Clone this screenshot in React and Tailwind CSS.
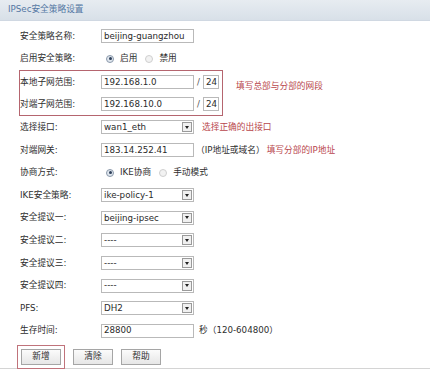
const FONT = "font-['DejaVu_Sans','Noto_Sans_CJK_SC',sans-serif]";

function TextBox({ value, className = 'w-[93px]' }) {
  return (
    <div className={`${className} h-[14px] border border-[#b9b9b9] bg-white flex items-center px-[2px] text-[#2a2a2a] leading-none`}>
      {value}
    </div>
  );
}

function SelectBox({ value }) {
  return (
    <div className="w-[93px] h-[14px] border border-[#b9b9b9] bg-white flex items-center justify-between pl-[2px] pr-[1px] text-[#2a2a2a] leading-none">
      <span>{value}</span>
      <span className="w-[10px] h-[10px] border border-[#9a9a9a] bg-[#f0f0f0] flex items-center justify-center">
        <span className="w-0 h-0 border-l-[2.5px] border-r-[2.5px] border-t-[3px] border-l-transparent border-r-transparent border-t-[#222]" />
      </span>
    </div>
  );
}

function Radio({ checked }) {
  return (
    <span
      className={`w-[8px] h-[8px] rounded-full border flex items-center justify-center ${
        checked ? 'border-[#8c9aab] bg-[#dfe6ee]' : 'border-[#cfcfcf] bg-[#f2f2f2]'
      }`}
    >
      {checked && <span className="w-[3px] h-[3px] rounded-full bg-[#2c3e58]" />}
    </span>
  );
}

function Row({ label, children }) {
  return (
    <div className="flex items-center h-[22.6px]">
      <div className="w-[101px] pl-[20px] text-[#2e2e2e]">{label}</div>
      {children}
    </div>
  );
}

function Note({ children, className = '' }) {
  return <span className={`text-[#b8464c] ${className}`}>{children}</span>;
}

function Button({ children }) {
  return (
    <button
      type="button"
      className="w-[40px] h-[16px] border border-[#a5a5a5] bg-gradient-to-b from-[#fbfbfb] to-[#e6e6e6] text-[#2e2e2e] leading-none"
    >
      {children}
    </button>
  );
}

export default function App() {
  return (
    <div className={`w-[430px] h-[371px] bg-white overflow-hidden text-[8.7px] ${FONT}`}>
      <div className="h-[21px] bg-gradient-to-b from-[#e7ecf1] to-[#d8e0e8] border-b border-[#d0d8e2] flex items-center px-[8px] text-[#5477a3]">
        IPSec安全策略设置
      </div>

      <div className="pt-[4px]">
        <Row label="安全策略名称:">
          <TextBox value="beijing-guangzhou" />
        </Row>
        <Row label="启用安全策略:">
          <div className="flex items-center ml-[5px] text-[#2e2e2e]">
            <Radio checked />
            <span className="ml-[6px]">启用</span>
            <span className="ml-[8px]">
              <Radio />
            </span>
            <span className="ml-[6px]">禁用</span>
          </div>
        </Row>

        <div className="flex items-start">
          <div className="ml-[19px] w-[204px] border border-[#b5656f]">
            <div className="flex items-center h-[22px]">
              <div className="w-[81px] text-[#2e2e2e]">本地子网范围:</div>
              <TextBox value="192.168.1.0" />
              <span className="ml-[3px] text-[#555]">/</span>
              <TextBox value="24" className="w-[16px] ml-[3px]" />
            </div>
            <div className="flex items-center h-[22px]">
              <div className="w-[81px] text-[#2e2e2e]">对端子网范围:</div>
              <TextBox value="192.168.10.0" />
              <span className="ml-[3px] text-[#555]">/</span>
              <TextBox value="24" className="w-[16px] ml-[3px]" />
            </div>
          </div>
          <Note className="ml-[13px] mt-[10px]">填写总部与分部的网段</Note>
        </div>

        <Row label="选择接口:">
          <SelectBox value="wan1_eth" />
          <Note className="ml-[8px]">选择正确的出接口</Note>
        </Row>
        <Row label="对端网关:">
          <TextBox value="183.14.252.41" />
          <span className="ml-[2px] text-[#2e2e2e]">（IP地址或域名）</span>
          <Note className="ml-[2px]">填写分部的IP地址</Note>
        </Row>
        <Row label="协商方式:">
          <div className="flex items-center ml-[5px] text-[#2e2e2e]">
            <Radio checked />
            <span className="ml-[6px]">IKE协商</span>
            <span className="ml-[8px]">
              <Radio />
            </span>
            <span className="ml-[6px]">手动模式</span>
          </div>
        </Row>
        <Row label="IKE安全策略:">
          <SelectBox value="ike-policy-1" />
        </Row>
        <Row label="安全提议一:">
          <SelectBox value="beijing-ipsec" />
        </Row>
        <Row label="安全提议二:">
          <SelectBox value="----" />
        </Row>
        <Row label="安全提议三:">
          <SelectBox value="----" />
        </Row>
        <Row label="安全提议四:">
          <SelectBox value="----" />
        </Row>
        <Row label="PFS:">
          <SelectBox value="DH2" />
        </Row>
        <Row label="生存时间:">
          <TextBox value="28800" />
          <span className="ml-[5px] text-[#2e2e2e]">秒（120-604800）</span>
        </Row>

        <div className="flex items-center gap-[8px] pl-[17px] mt-[3px] h-[23px]">
          <div className="border border-[#c0737b] p-[3px]">
            <Button>新增</Button>
          </div>
          <Button>清除</Button>
          <Button>帮助</Button>
        </div>
        <div className="h-px bg-[#d4d4d4]" />
      </div>
    </div>
  );
}
